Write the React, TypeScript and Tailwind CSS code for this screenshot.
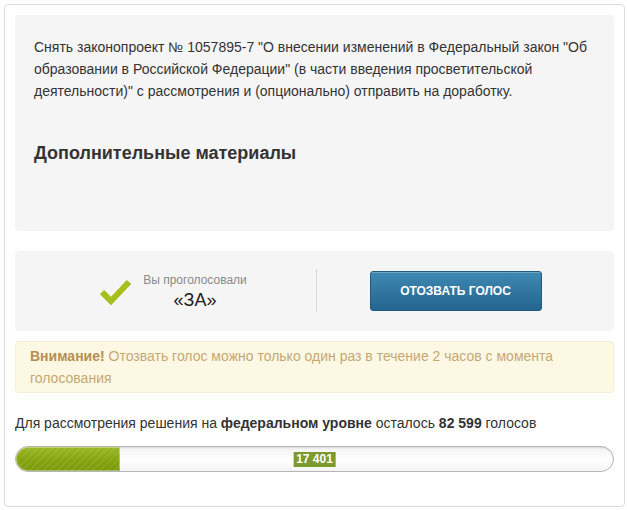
export default function App() {
  return (
    <div className="w-[627px] h-[510px] bg-white p-1 font-['Liberation_Sans',Arial,sans-serif]">
      <div className="h-[503px] w-[621px] rounded border border-[#dcdcdc] px-[10px] pt-[10px]">
        {/* description */}
        <div className="h-[216px] rounded-sm bg-[#f5f5f5] px-[19px] pt-[21px]">
          <p className="text-[14px] leading-[22px] text-[#333]">
            Снять законопроект № 1057895-7 "О внесении изменений в Федеральный закон "Об образовании в Российской Федерации" (в части введения просветительской деятельности)" с рассмотрения и (опционально) отправить на доработку.
          </p>
          <h3 className="mt-[41px] text-[18px] leading-[20px] font-bold text-[#333]">Дополнительные материалы</h3>
        </div>

        {/* vote */}
        <div className="mt-[20px] flex h-[80px] items-center rounded-sm bg-[#f5f5f5]">
          <div className="flex h-[42px] w-[302px] items-center justify-center border-r border-dotted border-[#c4c4c4] pl-[16px]">
            <svg width="32" height="26" viewBox="0 0 32 26" className="mr-[11px] mt-[2px]">
              <path d="M2 13 L11 22 L29 3" fill="none" stroke="#a6bf1c" strokeWidth="6" strokeLinecap="butt" strokeLinejoin="miter" />
            </svg>
            <div className="flex flex-col items-center">
              <span className="text-[12px] leading-[14px] text-[#8a8a8a]">Вы проголосовали</span>
              <span className="mt-[3px] text-[18px] leading-[20px] text-[#222]">«ЗА»</span>
            </div>
          </div>
          <div className="flex flex-1 justify-center pr-[20px]">
            <button className="h-[40px] w-[172px] rounded-[3px] border border-[#1f5a80] bg-gradient-to-b from-[#3e88b2] to-[#256690] text-[12px] font-bold uppercase text-white shadow-[inset_0_1px_0_rgba(255,255,255,0.25)]">
              Отозвать голос
            </button>
          </div>
        </div>

        {/* warning */}
        <p className="mt-[10px] rounded-sm border border-[#f7eed0] bg-[#fcf8e4] px-[14px] py-[3px] text-[14px] leading-[22px] text-[#c7a874]">
          <b className="text-[#b88e4c]">Внимание!</b> Отозвать голос можно только один раз в течение 2 часов с момента голосования
        </p>

        <p className="mt-[19px] text-[14px] leading-[22px] text-[#333]">
          Для рассмотрения решения на <b>федеральном уровне</b> осталось <b>82 599</b> голосов
        </p>

        {/* progress */}
        <div className="relative mt-[12px] h-[26px] overflow-hidden rounded-full border border-[#b5b5b5] bg-gradient-to-b from-[#f2f2f2] via-white to-[#f4f4f4] shadow-[inset_0_1px_2px_rgba(0,0,0,0.1)]">
          <div className="h-full w-[104px] rounded-l-full bg-[repeating-linear-gradient(135deg,rgba(255,255,255,0.07)_0px,rgba(255,255,255,0.07)_2px,transparent_2px,transparent_5px),linear-gradient(to_bottom,#9ab826,#84a40f_55%,#7a9a0c)] shadow-[inset_0_0_0_1px_rgba(255,255,255,0.35)]" />
          <span className="absolute left-1/2 top-[5px] -translate-x-1/2 bg-[#7d9a2c] px-[3px] text-[12px] leading-[15px] font-bold text-white">17 401</span>
        </div>
      </div>
    </div>
  );
}
